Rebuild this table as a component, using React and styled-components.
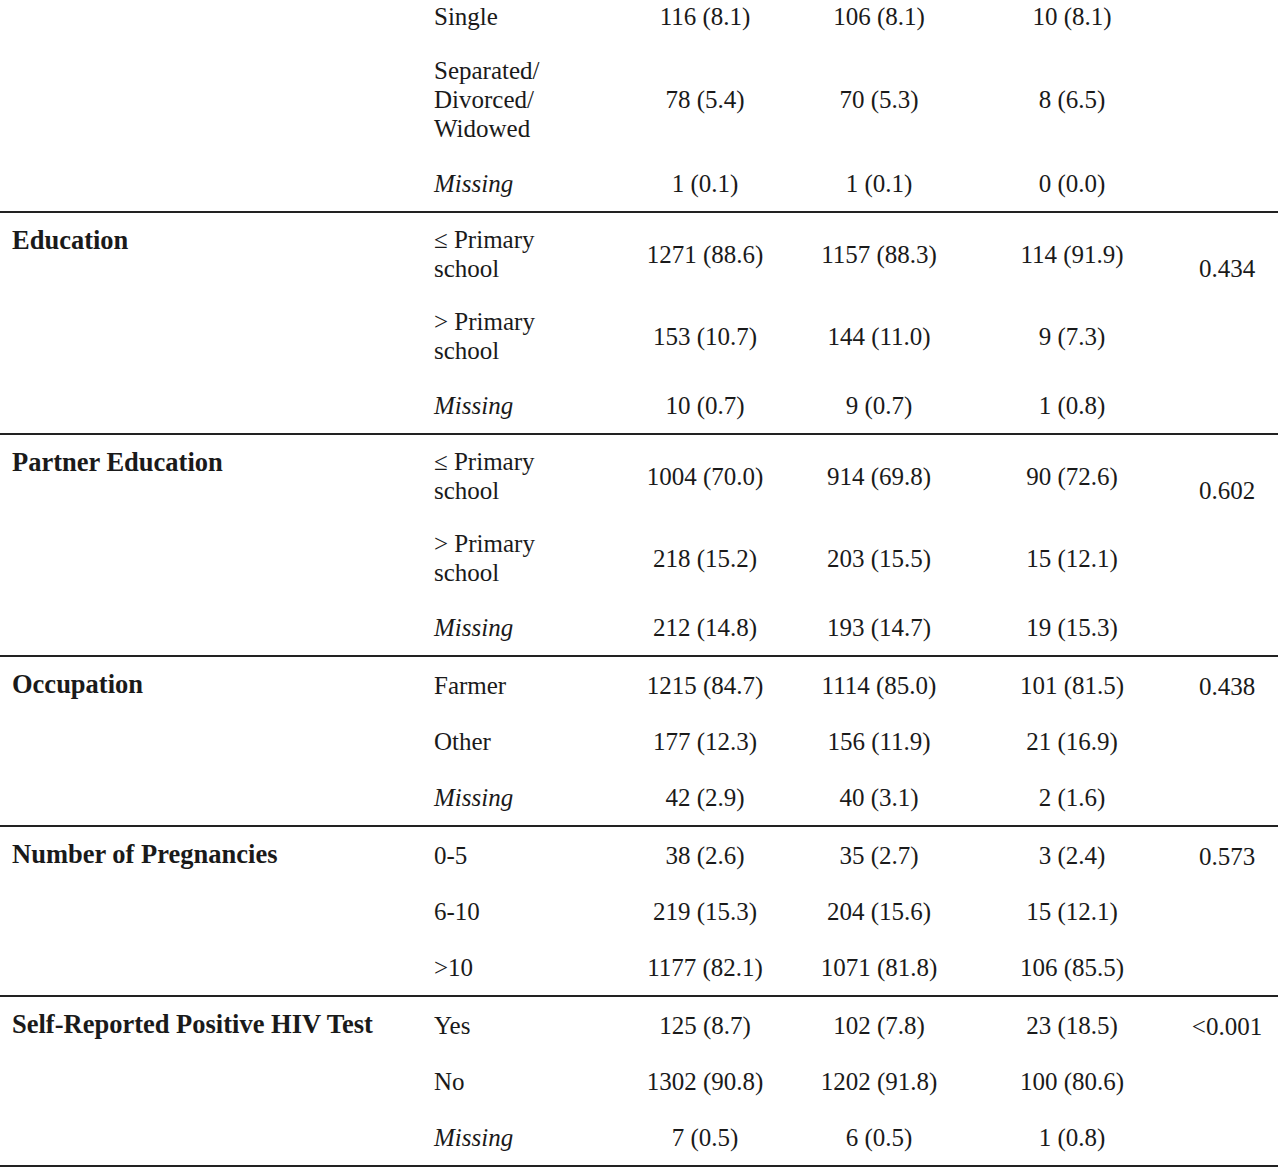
import React from "react";
import styled, { createGlobalStyle } from "styled-components";

const Global = createGlobalStyle`
  html, body { margin: 0; padding: 0; background: #fff; }
  body { font-family: "Liberation Serif", "Times New Roman", serif; color: #1a1a1a; overflow: hidden; }
`;

const Page = styled.main`
  width: 1278px;
  height: 1171px;
  overflow: hidden;
`;

const Table = styled.div`
  display: flex;
  flex-direction: column;
  margin-top: -12px;
`;

const Group = styled.section`
  display: grid;
  grid-template-columns: 420px 1fr;
  border-top: ${(p) => (p.$first ? "none" : "2px solid #222")};
  border-bottom: ${(p) => (p.$last ? "2px solid #222" : "none")};
`;

const GroupLabel = styled.div`
  padding: 13px 0 0 12px;
  font-weight: 700;
  font-size: 26.5px;
  line-height: 29px;
`;

const Rows = styled.div`
  display: flex;
  flex-direction: column;
`;

const Row = styled.div`
  display: grid;
  grid-template-columns: 200px 170px 178px 208px 102px;
  align-items: center;
  min-height: 56px;
  box-sizing: border-box;
  padding: 12px 0;
  font-size: 25px;
  line-height: 29px;
`;

const Category = styled.div`
  padding-left: 14px;
  font-style: ${(p) => (p.$italic ? "italic" : "normal")};
`;

const Num = styled.div`
  text-align: center;
  white-space: nowrap;
`;

const PValue = styled.div`
  text-align: center;
  align-self: end;
  white-space: nowrap;
`;

const groups = [
  {
    label: "",
    first: true,
    rows: [
      { cat: ["Single"], v: ["116 (8.1)", "106 (8.1)", "10 (8.1)"] },
      { cat: ["Separated/", "Divorced/", "Widowed"], v: ["78 (5.4)", "70 (5.3)", "8 (6.5)"] },
      { cat: ["Missing"], italic: true, v: ["1 (0.1)", "1 (0.1)", "0 (0.0)"] },
    ],
  },
  {
    label: "Education",
    p: "0.434",
    rows: [
      { cat: ["\u2264 Primary", "school"], v: ["1271 (88.6)", "1157 (88.3)", "114 (91.9)"] },
      { cat: ["> Primary", "school"], v: ["153 (10.7)", "144 (11.0)", "9 (7.3)"] },
      { cat: ["Missing"], italic: true, v: ["10 (0.7)", "9 (0.7)", "1 (0.8)"] },
    ],
  },
  {
    label: "Partner Education",
    p: "0.602",
    rows: [
      { cat: ["\u2264 Primary", "school"], v: ["1004 (70.0)", "914 (69.8)", "90 (72.6)"] },
      { cat: ["> Primary", "school"], v: ["218 (15.2)", "203 (15.5)", "15 (12.1)"] },
      { cat: ["Missing"], italic: true, v: ["212 (14.8)", "193 (14.7)", "19 (15.3)"] },
    ],
  },
  {
    label: "Occupation",
    p: "0.438",
    rows: [
      { cat: ["Farmer"], v: ["1215 (84.7)", "1114 (85.0)", "101 (81.5)"] },
      { cat: ["Other"], v: ["177 (12.3)", "156 (11.9)", "21 (16.9)"] },
      { cat: ["Missing"], italic: true, v: ["42 (2.9)", "40 (3.1)", "2 (1.6)"] },
    ],
  },
  {
    label: "Number of Pregnancies",
    p: "0.573",
    rows: [
      { cat: ["0-5"], v: ["38 (2.6)", "35 (2.7)", "3 (2.4)"] },
      { cat: ["6-10"], v: ["219 (15.3)", "204 (15.6)", "15 (12.1)"] },
      { cat: [">10"], v: ["1177 (82.1)", "1071 (81.8)", "106 (85.5)"] },
    ],
  },
  {
    label: "Self-Reported Positive HIV Test",
    p: "<0.001",
    last: true,
    rows: [
      { cat: ["Yes"], v: ["125 (8.7)", "102 (7.8)", "23 (18.5)"] },
      { cat: ["No"], v: ["1302 (90.8)", "1202 (91.8)", "100 (80.6)"] },
      { cat: ["Missing"], italic: true, v: ["7 (0.5)", "6 (0.5)", "1 (0.8)"] },
    ],
  },
];

export default function App() {
  return (
    <Page>
      <Global />
      <Table>
        {groups.map((g, gi) => (
          <Group key={gi} $first={g.first} $last={g.last}>
            <GroupLabel>{g.label}</GroupLabel>
            <Rows>
              {g.rows.map((r, ri) => (
                <Row key={ri}>
                  <Category $italic={r.italic}>
                    {r.cat.map((line, li) => (
                      <React.Fragment key={li}>
                        {li > 0 && <br />}
                        {line}
                      </React.Fragment>
                    ))}
                  </Category>
                  {r.v.map((val, vi) => (
                    <Num key={vi}>{val}</Num>
                  ))}
                  <PValue>{ri === 0 ? g.p : ""}</PValue>
                </Row>
              ))}
            </Rows>
          </Group>
        ))}
      </Table>
    </Page>
  );
}
